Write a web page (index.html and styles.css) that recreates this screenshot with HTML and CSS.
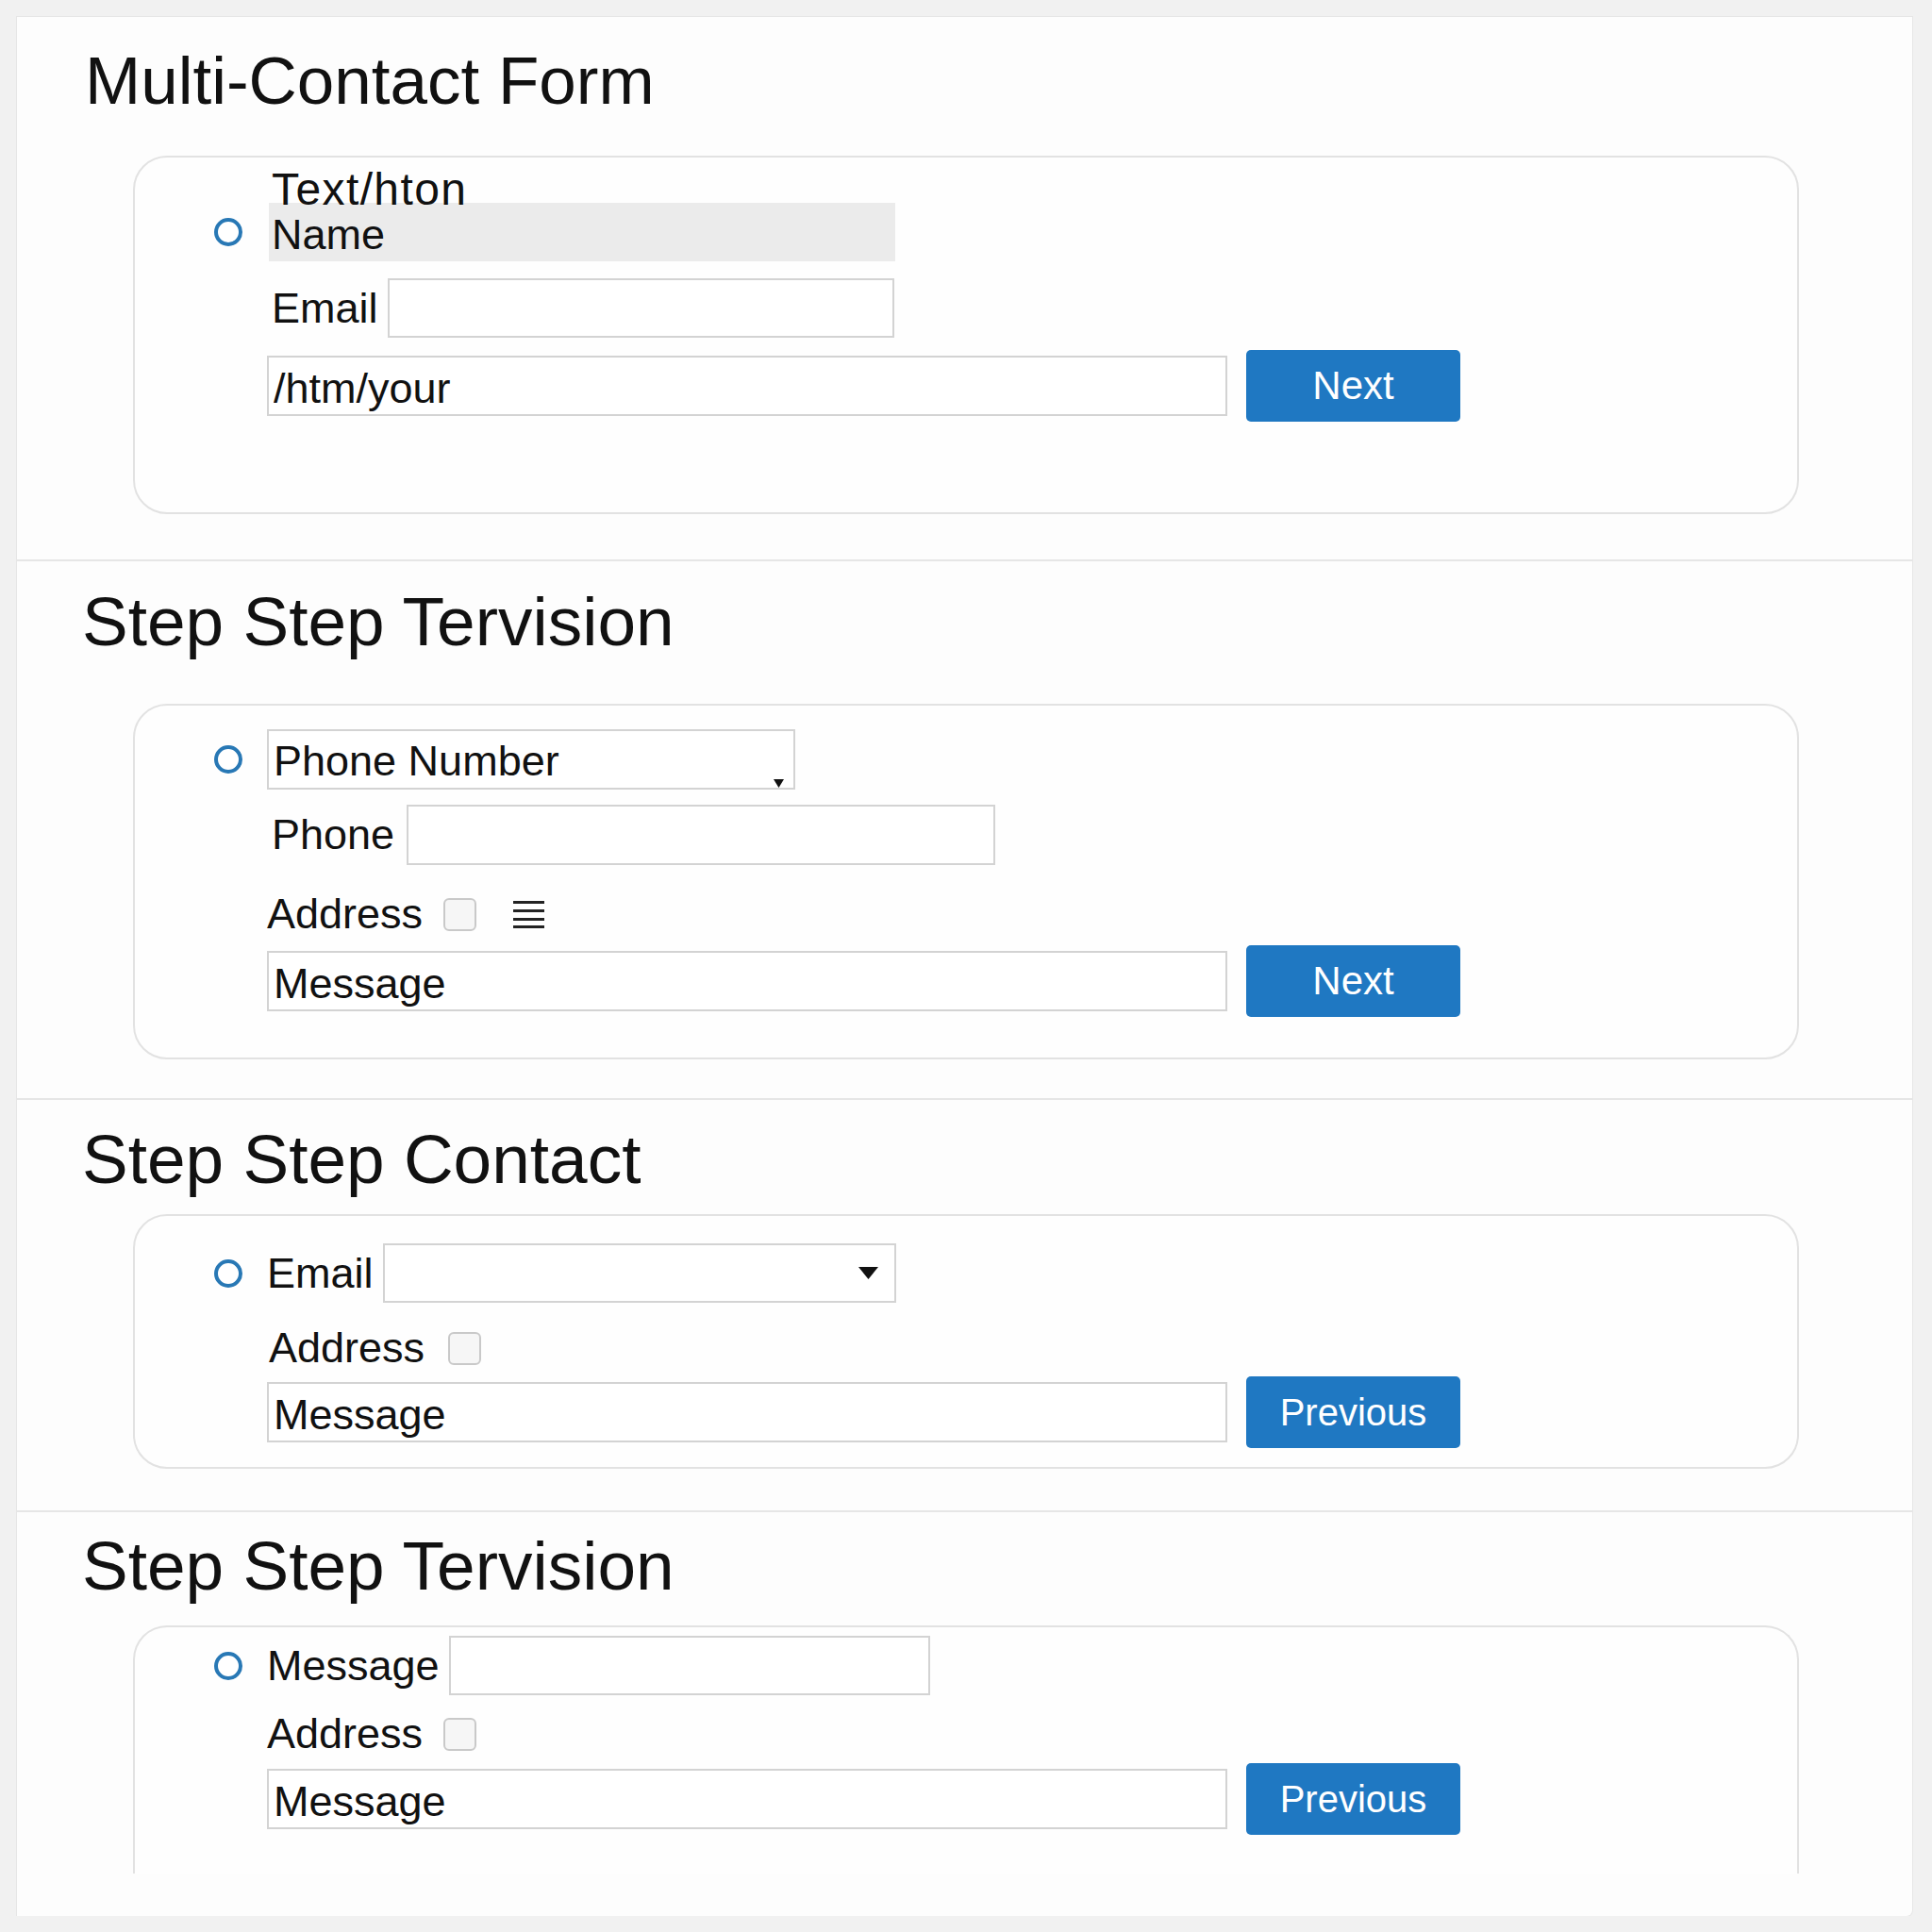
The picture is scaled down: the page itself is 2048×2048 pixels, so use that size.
FILE: index.html
```html
<!DOCTYPE html>
<html lang="en">
<head>
<meta charset="utf-8">
<title>Multi-Contact Form</title>
<link rel="stylesheet" href="styles.css">
</head>
<body>
<main class="panel">

  <section class="step step-1">
    <h1 class="step-title step-title-main">Multi-Contact Form</h1>
    <form class="card card-1">
      <div class="row">
        <span class="slot"></span>
        <div class="line"><span class="caption">Text/hton</span></div>
      </div>
      <div class="row row-name">
        <span class="slot"><span class="radio"></span></span>
        <div class="line"><div class="namebox">Name</div></div>
      </div>
      <div class="row sp-18">
        <span class="slot"></span>
        <div class="line line-tight"><label class="label label-indent">Email</label><input class="field w-email" type="text"></div>
      </div>
      <div class="row sp-13">
        <span class="slot"></span>
        <div class="line line-actions"><input class="field w-wide" type="text" value="/htm/your"><button class="btn" type="button">Next</button></div>
      </div>
    </form>
  </section>

  <section class="step step-2">
    <h2 class="step-title">Step Step Tervision</h2>
    <form class="card card-2">
      <div class="row">
        <span class="slot"><span class="radio"></span></span>
        <div class="line">
          <div class="select w-phone-select">
            <span class="select-text">Phone Number</span>
            <svg class="caret-small" width="11" height="9" viewBox="0 0 11 9"><path d="M0 0H11L5.5 9Z" fill="#111"/></svg>
          </div>
        </div>
      </div>
      <div class="row sp-16">
        <span class="slot"></span>
        <div class="line line-phone"><label class="label label-indent">Phone</label><input class="field w-phone" type="text"></div>
      </div>
      <div class="row sp-27">
        <span class="slot"></span>
        <div class="line line-address">
          <label class="label">Address</label><input class="check" type="checkbox">
          <svg class="lines" width="33" height="30" viewBox="0 0 33 30"><rect x="0" y="1" width="33" height="3" fill="#222"/><rect x="0" y="10" width="33" height="3" fill="#222"/><rect x="0" y="19" width="33" height="3" fill="#222"/><rect x="0" y="27" width="33" height="3" fill="#222"/></svg>
        </div>
      </div>
      <div class="row sp-8">
        <span class="slot"></span>
        <div class="line line-actions"><input class="field w-wide" type="text" value="Message"><button class="btn" type="button">Next</button></div>
      </div>
    </form>
  </section>

  <section class="step step-3">
    <h2 class="step-title">Step Step Contact</h2>
    <form class="card card-3">
      <div class="row">
        <span class="slot"><span class="radio"></span></span>
        <div class="line line-tight">
          <label class="label">Email</label>
          <div class="select w-email-select">
            <span class="select-text"></span>
            <svg class="caret" width="21" height="13" viewBox="0 0 21 13"><path d="M0 0H21L10.5 13Z" fill="#111"/></svg>
          </div>
        </div>
      </div>
      <div class="row sp-23">
        <span class="slot"></span>
        <div class="line line-address line-address-wide"><label class="label label-nudge">Address</label><input class="check" type="checkbox"></div>
      </div>
      <div class="row sp-5">
        <span class="slot"></span>
        <div class="line line-actions"><input class="field w-wide" type="text" value="Message"><button class="btn btn-prev" type="button">Previous</button></div>
      </div>
    </form>
  </section>

  <section class="step step-4">
    <h2 class="step-title">Step Step Tervision</h2>
    <form class="card card-4">
      <div class="row">
        <span class="slot"><span class="radio"></span></span>
        <div class="line line-tight"><label class="label">Message</label><input class="field w-message" type="text"></div>
      </div>
      <div class="row sp-16">
        <span class="slot"></span>
        <div class="line line-address"><label class="label">Address</label><input class="check" type="checkbox"></div>
      </div>
      <div class="row sp-6">
        <span class="slot"></span>
        <div class="line line-actions"><input class="field w-wide" type="text" value="Message"><button class="btn btn-prev" type="button">Previous</button></div>
      </div>
    </form>
  </section>

</main>
</body>
</html>
```

FILE: styles.css
```css
* { box-sizing: border-box; }

html, body { margin: 0; }

body {
  background: #f1f1f1;
  font-family: "Liberation Sans", Arial, sans-serif;
  color: #111;
}

.panel {
  position: relative;
  margin: 18px 21px 0 18px;
  background: #fdfdfd;
  box-shadow: 0 0 0 1px #e6e6e6;
  border-radius: 0 0 6px 0;
}

.panel::after {
  content: "";
  position: absolute;
  top: 100%;
  left: 1588px;
  width: 412px;
  height: 16px;
  background: #fdfdfd;
  clip-path: polygon(0 0, 100% 0, 96% 100%, 4% 100%);
}

.step { border-bottom: 2px solid #e6e6e6; }
.step-1 { padding: 28px 0 48px; }
.step-2 { padding: 24px 0 41px; }
.step-3 { padding: 23px 0 44px; }
.step-4 { padding: 17px 0 45px; border-bottom: none; }

.step-title {
  margin: 0;
  padding-left: 69px;
  font-size: 73px;
  font-weight: 400;
  line-height: 80px;
  color: #111;
}
.step-title-main {
  padding-left: 72px;
  font-size: 71px;
}

.card {
  margin: 0 120px 0 123px;
  border: 2px solid #e2e2e2;
  border-radius: 36px;
  padding-left: 84px;
  background: #fefefe;
}
.card-1 { margin-top: 39px; padding-top: 16px; padding-bottom: 96px; }
.card-2 { margin-top: 47px; padding-top: 25px; padding-bottom: 43px; }
.card-3 { margin-top: 18px; padding-top: 29px; padding-bottom: 20px; }
.card-4 {
  margin-top: 23px;
  padding-top: 9px;
  padding-bottom: 41px;
  border-bottom: none;
  border-radius: 36px 36px 0 0;
}

.row {
  display: grid;
  grid-template-columns: 30px 1fr;
  column-gap: 26px;
  align-items: center;
}
.row-name { margin-top: -4px; }
.sp-5 { margin-top: 5px; }
.sp-6 { margin-top: 6px; }
.sp-8 { margin-top: 8px; }
.sp-13 { margin-top: 13px; }
.sp-16 { margin-top: 16px; }
.sp-18 { margin-top: 18px; }
.sp-23 { margin-top: 23px; }
.sp-27 { margin-top: 27px; }

.slot { display: flex; align-items: center; justify-content: center; }

.radio {
  width: 30px;
  height: 30px;
  border: 4px solid #2878b5;
  border-radius: 50%;
  background: #fff;
}

.line {
  display: flex;
  align-items: center;
  gap: 15px;
}
.line-tight { gap: 10px; }
.line-phone { gap: 13px; }
.line-address { gap: 22px; }
.line-address-wide { gap: 25px; }
.line-actions { gap: 20px; }

.caption {
  position: relative;
  z-index: 1;
  font-size: 48px;
  line-height: 36px;
  letter-spacing: 1.4px;
  padding-left: 5px;
}

.namebox {
  width: 664px;
  height: 62px;
  margin-left: 2px;
  padding: 6px 0 0 3px;
  font-size: 45px;
  line-height: 56px;
  background: #ebebeb;
}

.label {
  font-size: 45px;
  line-height: 50px;
  white-space: nowrap;
}
.label-indent { padding-left: 5px; }
.label-nudge { padding-left: 2px; }

.field {
  height: 64px;
  border: 2px solid #d3d3d3;
  border-radius: 0;
  padding: 6px 0 0 5px;
  font: 45px "Liberation Sans", Arial, sans-serif;
  color: #111;
  background: #fff;
  outline: none;
}
.w-email { width: 537px; height: 63px; }
.w-wide { width: 1018px; }
.w-phone { width: 624px; }
.w-message { width: 510px; height: 63px; }

.select {
  display: flex;
  align-items: center;
  height: 64px;
  border: 2px solid #d3d3d3;
  background: #fff;
  padding: 4px 0 0 5px;
}
.select-text { font-size: 45px; line-height: 56px; }
.w-phone-select { width: 560px; }
.w-email-select { width: 544px; height: 63px; padding: 0 17px 0 5px; }

.caret-small { margin-left: auto; margin-right: 10px; align-self: flex-end; }
.caret { margin-left: auto; }

.check {
  appearance: none;
  -webkit-appearance: none;
  margin: 0;
  width: 35px;
  height: 35px;
  border: 2px solid #c9c9c9;
  border-radius: 6px;
  background: #f6f6f6;
}

.lines { margin-left: 17px; }

.btn {
  width: 227px;
  height: 76px;
  border: none;
  border-radius: 5px;
  background: #1f78c2;
  color: #fff;
  font: 42px "Liberation Sans", Arial, sans-serif;
  padding: 0;
}
.btn-prev { font-size: 40px; }
```
